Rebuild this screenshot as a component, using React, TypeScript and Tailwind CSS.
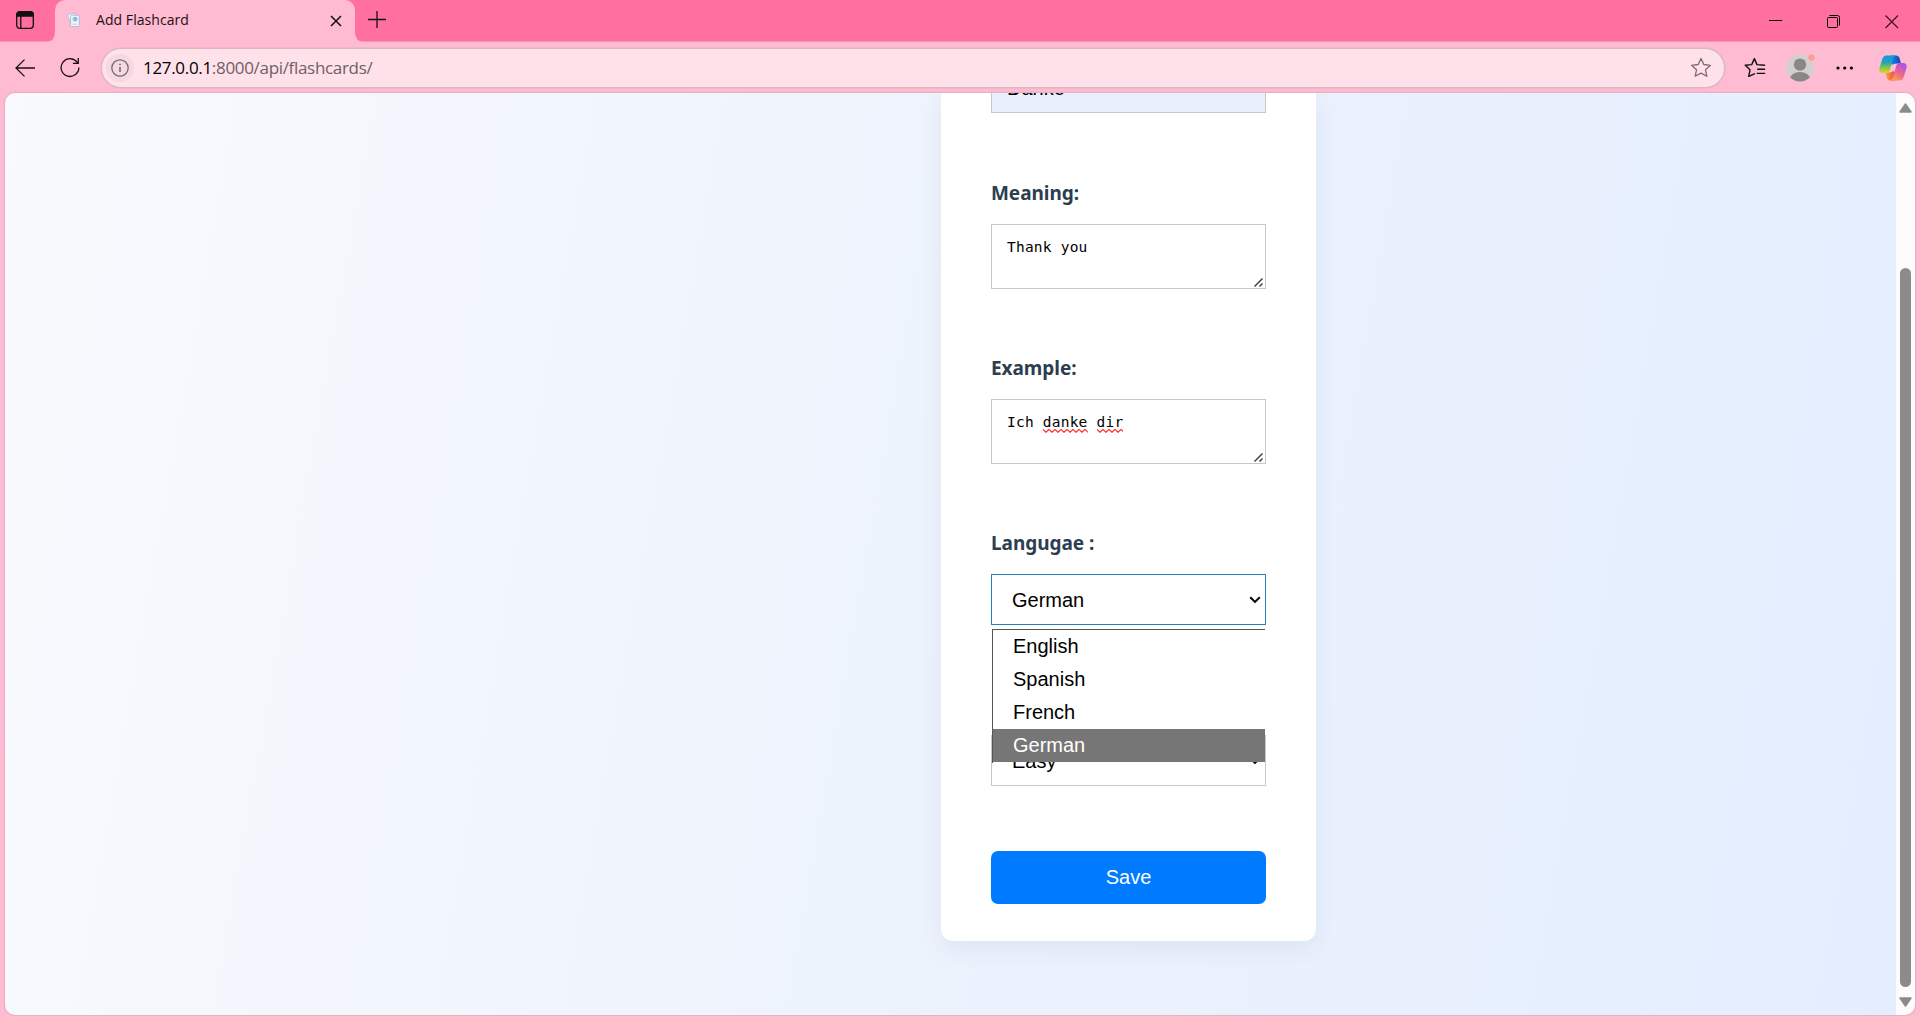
import React from "react";

const SEGOE = "font-['Open_Sans',sans-serif]";
const ARIAL = "font-['Liberation_Sans',Arial,sans-serif]";

function TabBar() {
  return (
    <div className="flex h-[42px] bg-[#ff6f9f] shadow-[inset_0_-1px_0_#ff8fb3]">
      <div className="flex w-[55px] shrink-0 items-start rounded-br-[10px] pl-4 pt-[11px]">
        <svg width="18" height="18" viewBox="0 0 18 18" fill="none" stroke="#111" strokeWidth="1.3">
          <rect x="0.7" y="0.7" width="16.6" height="16.6" rx="3" />
          <path d="M1 3.5Q1 1 3.5 1h11Q17 1 17 3.5V5H1z" fill="#111" />
          <path d="M4.8 5v12" />
        </svg>
      </div>
      <div className="relative flex h-[42px] w-[300px] shrink-0 items-center rounded-t-[10px] bg-[#ffbbd1] pb-[3px] pl-3">
        <svg className="absolute -left-[10px] bottom-0" width="10" height="10" viewBox="0 0 10 10">
          <path d="M10 0v10H0Q10 10 10 0" fill="#ffbbd1" />
        </svg>
        <svg className="absolute -right-[10px] bottom-0" width="10" height="10" viewBox="0 0 10 10">
          <path d="M0 0v10h10Q0 10 0 0" fill="#ffbbd1" />
        </svg>
        <svg width="14" height="16" viewBox="0 0 14 16">
          <path d="M0.5 2.5L8 1l1.5 9-6 1.5z" fill="#f0f6fd" stroke="#a9b9de" strokeWidth=".8" />
          <rect x="3.6" y="3.2" width="8.6" height="11.4" rx=".8" fill="#f0f6fd" stroke="#a9b4df" strokeWidth=".9" />
          <circle cx="8" cy="7.2" r="2.4" fill="#6cc0ea" />
          <path d="M5.500 6.800l1.500-1 1.200 2-1.600 1.400z" fill="#d2cf60" />
          <path d="M5.2 12.2h5" stroke="#c3cee6" />
        </svg>
        <span className={`${SEGOE} ml-[15px] w-[234px] text-[14px] tracking-[0.06px] text-[#1c1015]`}>Add Flashcard</span>
        <svg className="mt-[2px]" width="12" height="12" viewBox="0 0 12 12" stroke="#111" strokeWidth="1.5">
          <path d="M1 1l10 10M11 1L1 11" />
        </svg>
      </div>
      <svg className="ml-[13px] mt-[11px]" width="18" height="18" viewBox="0 0 18 18" stroke="#111" strokeWidth="1.3">
        <path d="M9 0v17M0 8.5h18" />
      </svg>
      <div className="ml-auto mr-[21px] mt-[14px] flex items-start">
        <svg width="14" height="14" viewBox="0 0 14 14">
          <path d="M1 6.5h13" stroke="#000" />
        </svg>
        <svg className="ml-[45px]" width="14" height="15" viewBox="0 0 14 15" fill="none" stroke="#000">
          <rect x=".5" y="3.5" width="10" height="10" rx="1" />
          <path d="M2.5 1.5h8q2 0 2 2v8" />
        </svg>
        <svg className="ml-[43px]" width="15" height="15" viewBox="0 0 15 15" stroke="#3c1020" strokeWidth="1.1">
          <path d="M1.5 1.5l12.5 12.5M14 1.5L1.5 14" />
        </svg>
      </div>
    </div>
  );
}

function AddressBar() {
  return (
    <div className="flex h-[51px] items-center bg-[#ffbbd1] pl-[15px] pr-[13px]">
      <svg width="20" height="18" viewBox="0 0 20 18" fill="none" stroke="#1a1014" strokeWidth="1.3">
        <path d="M20 9H1M9.5 .6L1 9l8.5 8.4" />
      </svg>
      <svg className="ml-[25px]" width="20" height="21" viewBox="0 0 21 21" fill="none" stroke="#1a1014" strokeWidth="1.4">
        <path d="M18.6 6A9.3 9.3 0 1 0 19.8 10.5M19.2 .5v5.7h-5.6" />
      </svg>
      <div className="ml-[21px] flex h-10 w-[1624px] shrink-0 items-center rounded-full border border-[#dcb5c2] bg-[#ffe1ea] pl-1 pr-3 shadow-[0_0_0_0.5px_#dcb5c2]">
        <span className="flex size-7 items-center justify-center rounded-full bg-[#f6d8e2]">
          <svg width="18" height="18" viewBox="0 0 18 18" fill="none" stroke="#776a70" strokeWidth="1.3">
            <circle cx="9" cy="9" r="8.2" />
            <path d="M9 8v5" strokeWidth="1.6" />
            <circle cx="9" cy="5.4" r=".5" fill="#776a70" strokeWidth=".9" />
          </svg>
        </span>
        <span className={`${SEGOE} ml-[9px] text-[17px] tracking-[-0.32px] text-[#6e5f65]`}>
          <span className="text-black">127.0.0.1</span>:8000/api/flashcards/
        </span>
        <svg className="ml-auto" width="22" height="22" viewBox="0 0 22 22" fill="none" stroke="#7d6c73" strokeWidth="1.3" strokeLinejoin="round">
          <path d="M11 1.5l2.8 6 6.6.8-4.9 4.5 1.3 6.5L11 16.1l-5.8 3.2 1.3-6.5L1.6 8.3l6.6-.8z" />
        </svg>
      </div>
      <svg className="ml-[19px]" width="22" height="22" viewBox="0 0 22 22" fill="none" stroke="#111" strokeWidth="1.4" strokeLinejoin="round" strokeLinecap="round">
        <path d="M20.600 8.300L13 7.600 10.400 1.600 7.700 7.600 1.200 8.300l4.800 4.500-1.300 6.600L10.400 16.800M13.700 12.200h6.900M13.200 16.400h7.400" />
      </svg>
      <div className="relative ml-5 size-7">
        <svg width="28" height="28" viewBox="0 0 28 28">
          <defs><clipPath id="face"><circle cx="14" cy="14" r="13.6" /></clipPath></defs>
          <g clipPath="url(#face)">
            <rect width="28" height="28" fill="#d2d0ce" />
            <circle cx="14" cy="10.6" r="6.2" fill="#8a8785" />
            <ellipse cx="14" cy="26" rx="10.5" ry="8" fill="#8a8785" />
          </g>
        </svg>
        <span className="absolute -right-[2px] -top-[1px] size-[9px] rounded-full border border-[#ffc9d4] bg-[#f9a197]" />
      </div>
      <svg className="ml-[22px]" width="18" height="4" viewBox="0 0 18 4">
        <circle cx="2" cy="2" r="1.6" /><circle cx="8.7" cy="2" r="1.6" /><circle cx="15.4" cy="2" r="1.6" />
      </svg>
      <svg className="ml-auto" width="28" height="26" viewBox="0 0 28 26">
        <defs>
          <linearGradient id="c1" x1="0" y1="0" x2="0" y2="1"><stop offset="0" stopColor="#1595e0" /><stop offset=".4" stopColor="#27a2b8" /><stop offset=".7" stopColor="#7ccb4a" /><stop offset="1" stopColor="#f3cf1b" /></linearGradient>
          <linearGradient id="c2" x1=".8" y1="0" x2=".3" y2="1"><stop offset="0" stopColor="#a056ef" /><stop offset=".5" stopColor="#e8609a" /><stop offset="1" stopColor="#ff9a4d" /></linearGradient>
          <linearGradient id="c3" x1="0" y1="0" x2="1" y2="0"><stop offset="0" stopColor="#1688e6" /><stop offset="1" stopColor="#1740bd" /></linearGradient>
          <linearGradient id="c4" x1="0" y1="0" x2="1" y2="0"><stop offset="0" stopColor="#f9a93a" /><stop offset="1" stopColor="#e74b42" /></linearGradient>
        </defs>
        <path d="M12 .5h5.500q2.200 0 3 2.500l1.500 5.500h-3.500q-2 0-2.800 2L12 9z" fill="url(#c3)" />
        <path d="M16 25.500h-5q-2.200 0-3-2.500L6.500 17.500H10q2 0 2.800-2L16 17z" fill="url(#c4)" />
        <path d="M7.500 .5H17q-2 .5-3 3.500l-3.200 11q-.9 3-3.600 3H4q-4.500 0-3.500-5L3.300 4Q4.500 .5 7.500 .5z" fill="url(#c1)" />
        <path d="M20.500 25.500H11q2-.5 3-3.500l3.200-11q.9-3 3.600-3H24q4.500 0 3.500 5L24.700 22q-1.200 3.500-4.200 3.500z" fill="url(#c2)" />
        <path d="M17.600 8.600q-1.800 0-2.800.3-1.200.6-1.800 2.600l-1.900 6q2.300-.3 3.300-2.500z" fill="#ffc3d5" />
      </svg>
    </div>
  );
}

function Label({ children }: { children: React.ReactNode }) {
  return <div className="h-[31px] pt-px font-['Noto_Sans',sans-serif] text-[19px] font-bold leading-[31px] tracking-[-0.05px] text-[#2c3e50]">{children}</div>;
}

function TextArea({ children }: { children: React.ReactNode }) {
  return (
    <div className="relative mt-[16px] h-[65px] border border-[#c8c8c8] bg-white pl-[15px] pt-[12px] font-['DejaVu_Sans_Mono',monospace] text-[14.5px] leading-5 tracking-[0.22px] text-black">
      {children}
      <svg className="absolute bottom-[1px] right-[2px]" width="9" height="9" viewBox="0 0 9 9" stroke="#444" strokeWidth="1.5">
        <path d="M.5 8.500l8-8M5.500 8.500l3-3" />
      </svg>
    </div>
  );
}

function Misspelled({ children }: { children: React.ReactNode }) {
  return <span className="relative inline-block">
    {children}
    <svg className="absolute bottom-[-1px] left-0" width="100%" height="4">
      <defs><pattern id="wave" width="6" height="4" patternUnits="userSpaceOnUse"><path d="M-.5 0L3 3.200 6.500 0" fill="none" stroke="#f33" strokeWidth="1.300" /></pattern></defs>
      <rect width="100%" height="4" fill="url(#wave)" />
    </svg>
  </span>;
}

function Select({ value, focused = false }: { value: string; focused?: boolean }) {
  return (
    <div className={`${ARIAL} flex h-[51px] items-center justify-between border bg-white pl-5 pr-[4px] text-[20px] text-black ${focused ? "border-[#2980b9]" : "border-[#c8c8c8]"}`}>
      <span>{value}</span>
      <svg width="12" height="8" viewBox="0 0 12 8" fill="none" stroke="#000" strokeWidth="2"><path d="M1.200 1.200L6 5.900l4.800-4.700" /></svg>
    </div>
  );
}

const OPTIONS = ["English", "Spanish", "French", "German"];

function OptionMenu({ selected }: { selected: string }) {
  return (
    <div className={`${ARIAL} absolute left-px top-[55px] z-10 h-[134px] w-[273px] border-l border-t border-[#555] text-[20px] leading-[33px] text-black`}>
      {OPTIONS.map((o) => (
        <div key={o} className={`h-[33px] pl-5 ${o === selected ? "bg-[#767676] text-white" : "bg-white"}`}>{o}</div>
      ))}
    </div>
  );
}

function Scrollbar() {
  return (
    <div className="flex w-[19px] shrink-0 flex-col items-center bg-[#fcfcfc] pb-2 pt-[10px]">
      <svg width="13" height="10" viewBox="0 0 13 10"><path d="M6.500 1L12 9H1z" fill="#8b8b8b" stroke="#8b8b8b" strokeWidth="1.500" strokeLinejoin="round" /></svg>
      <div className="mt-[155px] h-[719px] w-[11px] rounded-full bg-[#8b8b8b]" />
      <svg className="mt-auto" width="13" height="10" viewBox="0 0 13 10"><path d="M6.500 9L12 1H1z" fill="#8b8b8b" stroke="#8b8b8b" strokeWidth="1.500" strokeLinejoin="round" /></svg>
    </div>
  );
}

export default function App() {
  return (
    <div className="flex h-[1016px] w-[1920px] flex-col overflow-hidden bg-[#ffbbd1]">
      <TabBar />
      <AddressBar />
      <div className="mx-[5px] flex h-[922px] overflow-hidden rounded-[10px] shadow-[0_0_2px_#b88a99]">
        <main className="h-full flex-1 bg-[linear-gradient(100deg,#f8fafd_0%,#edf3fd_50%,#e4eeff_100%)] pl-[936px]">
          <div className="h-[848px] w-[375px] rounded-b-[12px] bg-white px-[50px] shadow-[0_8px_25px_rgba(44,62,80,0.07)]">
            <div className={`${ARIAL} flex h-5 items-end overflow-hidden border border-t-0 border-[#c8c8c8] bg-[#e8f0fe] pb-[13px] pl-[15px] text-[20px] leading-[22px] text-black`}>Danke</div>
            <div className="mt-[64px]"><Label>Meaning:</Label></div>
            <TextArea>Thank you</TextArea>
            <div className="mt-[63px]"><Label>Example:</Label></div>
            <TextArea>Ich <Misspelled>danke</Misspelled> <Misspelled>dir</Misspelled></TextArea>
            <div className="mt-[63px]"><Label>Langugae :</Label></div>
            <div className="relative mt-[16px]">
              <Select value="German" focused />
              <OptionMenu selected="German" />
            </div>
            <div className="mt-[110px]"><Select value="Easy" /></div>
            <button className={`${ARIAL} mt-[65px] block h-[53px] w-full rounded-[7px] bg-[#007bff] pb-[2px] text-[20px] text-white`}>Save</button>
          </div>
        </main>
        <Scrollbar />
      </div>
    </div>
  );
}
